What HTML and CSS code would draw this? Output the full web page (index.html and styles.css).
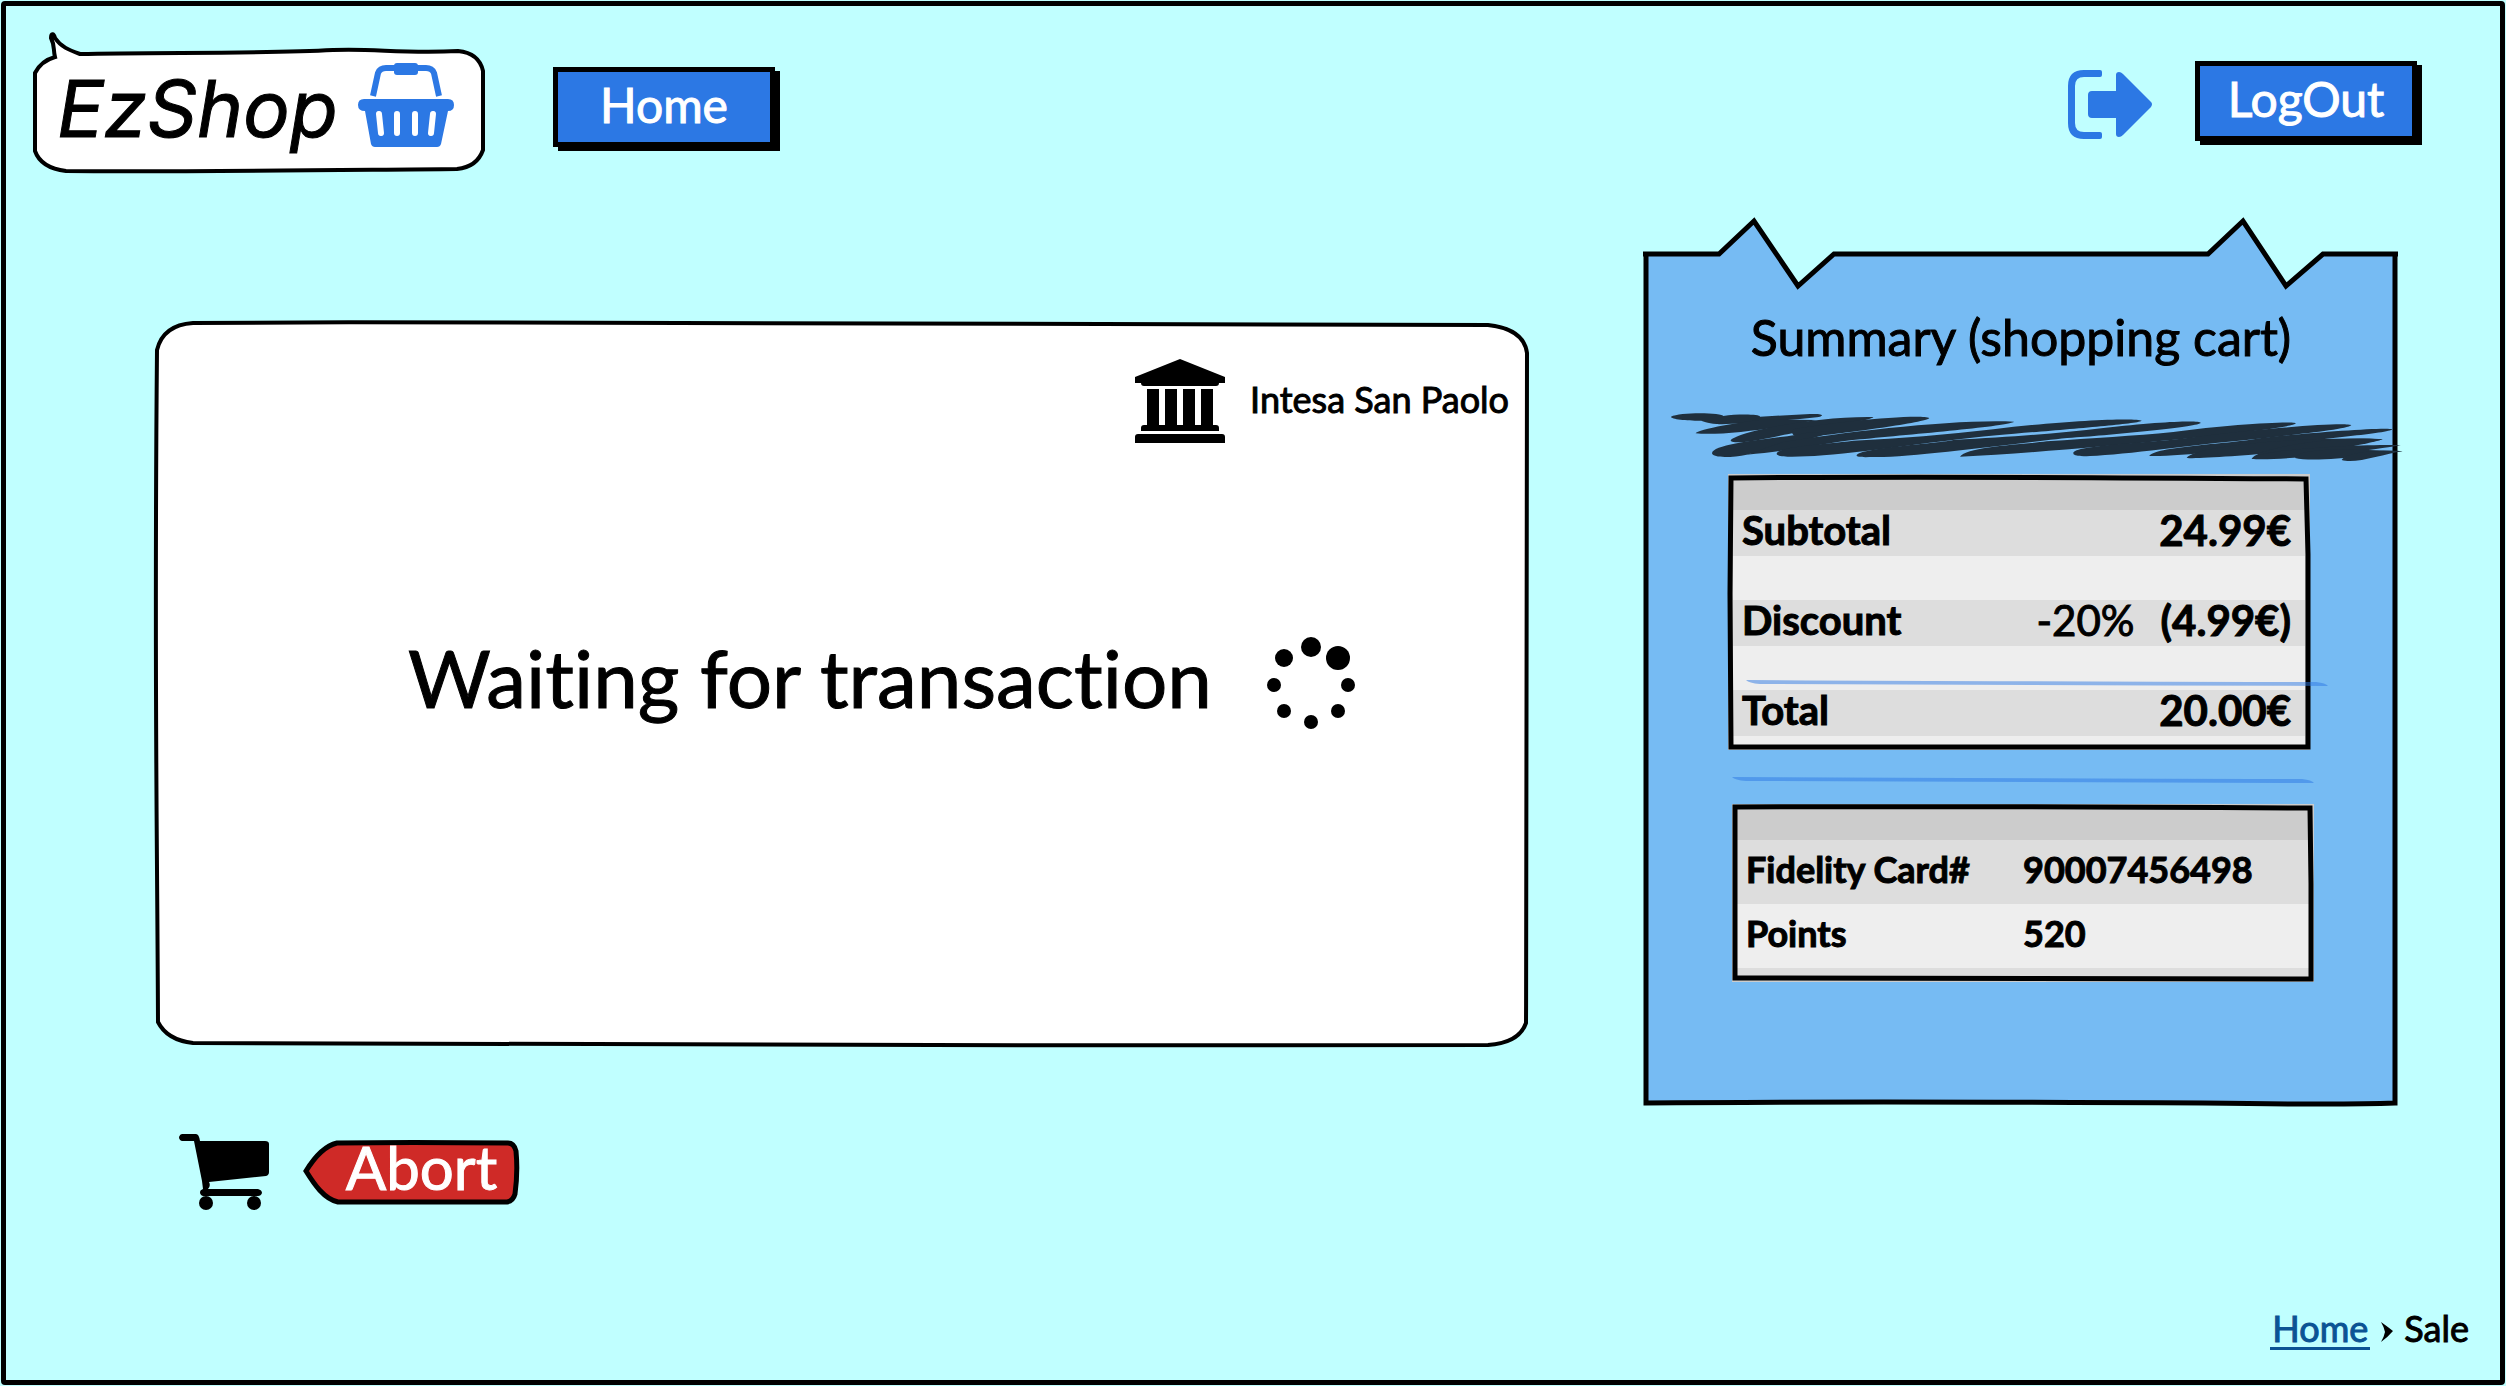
FILE: index.html
```html
<!DOCTYPE html>
<html lang="en">
<head>
<meta charset="utf-8">
<title>EzShop - Sale</title>
<link rel="stylesheet" href="styles.css">
</head>
<body>
<header class="topbar">
  <div class="logo">
    <svg class="sketch" viewBox="0 0 452 126" preserveAspectRatio="none" aria-hidden="true">
      <path class="bubble" d="M2 26Q8 14 22 10C20 2 22-1 18-9C18-15 21-13 22-9C28 0 36 3 47 7C120 5 230 7 300 3C340 1 370 7 425 4Q446 6 450 24L450 103Q444 120 424 122C300 123 150 125 33 124Q8 121 2 104Z"/>
    </svg>
    <span class="logo-text">EzShop</span>
    <svg class="basket" viewBox="0 0 96 84" aria-hidden="true">
      <path d="M15 33L20 10Q22 5 28 5L68 5Q74 5 76 10L81 33" fill="none" stroke="#2c78e4" stroke-width="6"/>
      <rect x="36" y="0" width="24" height="12" rx="3" fill="#2c78e4"/>
      <path d="M6 36H90Q96 36 96 42Q96 48 90 48L83 81Q82 84 79 84H17Q14 84 13 81L7 48Q0 48 0 42Q0 36 6 36Z" fill="#2c78e4"/>
      <path d="M21 51L23 70M39 51V70M57 51V70M75 51L73 70" stroke="#fff" stroke-width="6" stroke-linecap="round"/>
    </svg>
  </div>
  <button class="btn btn-home" type="button">Home</button>
  <div class="session">
    <svg class="exit" viewBox="0 0 84 69" aria-hidden="true">
      <path d="M32 0Q34 0 34 2V5Q34 7 32 7H16Q7 7 7 16V53Q7 62 16 62H32Q34 62 34 64V67Q34 69 32 69H16Q0 69 0 53V16Q0 0 16 0Z"/>
      <path d="M24 21H48V5Q48 2 51 2Q53 2 55 4L83 32Q85 34 83 37L55 65Q53 67 51 67Q48 67 48 64V48H24Q20 48 20 44V25Q20 21 24 21Z"/>
    </svg>
    <button class="btn" type="button">LogOut</button>
  </div>
</header>

<main class="content">
  <div class="left">
    <section class="card">
      <svg class="sketch" viewBox="0 0 1374 725" preserveAspectRatio="none" aria-hidden="true">
        <path class="outline" d="M2 29Q8 4 38 2C450-1 850 2 1333 4Q1369 8 1372 32C1373 300 1372 500 1371 702Q1364 722 1333 724C900 725 400 724 38 722Q12 719 3 701C2 480-1 350 2 29Z"/>
      </svg>
      <div class="bank">
        <svg class="bank-icon" viewBox="0 0 90 84" aria-hidden="true">
          <path d="M45 0L90 18V24H84Q84 27 81 27H9Q6 27 6 24H0V18ZM12 30H24V66H30V30H42V66H48V30H60V66H66V30H78V66H81Q84 66 84 69V72H6V69Q6 66 9 66H12ZM3 75H87Q90 75 90 78V84H0V78Q0 75 3 75Z"/>
        </svg>
        <span class="bank-name">Intesa San Paolo</span>
      </div>
      <div class="waiting">
        <h1>Waiting for transaction</h1>
        <svg class="spinner" viewBox="0 0 90 94" aria-hidden="true">
          <circle cx="45" cy="10" r="10"/><circle cx="72" cy="21" r="12"/><circle cx="82" cy="48" r="7"/><circle cx="72" cy="74" r="7"/><circle cx="45" cy="85" r="7"/><circle cx="18" cy="74" r="7"/><circle cx="8" cy="48" r="7"/><circle cx="18" cy="21" r="9"/>
        </svg>
      </div>
    </section>
    <div class="actions">
      <svg class="cart" viewBox="0 0 90 76" aria-hidden="true">
        <path d="M3 0H17Q20 0 21 7H86Q90 7 90 10V38Q90 41 87 42L30 48Q32 52 29 55H79Q83 56 83 59Q82 62 79 62H24Q21 61 21 58Q21 56 24 55L23 47L15 7H3Q0 6 0 3Q1 0 3 0Z"/>
        <circle cx="27" cy="69" r="7"/><circle cx="75" cy="69" r="7"/>
      </svg>
      <button class="abort" type="button">
        <svg class="sketch" viewBox="0 0 215 64" preserveAspectRatio="none" aria-hidden="true">
          <path d="M2 31C10 18 20 6 33 3Q100 2 204 3Q210 3 212 11Q214 32 211 54Q209 61 203 62H34C20 59 10 44 2 31Z" fill="#cf2a27" stroke="#000" stroke-width="5"/>
        </svg>
        <span class="abort-label">Abort</span>
      </button>
    </div>
  </div>

  <aside class="summary">
    <svg class="sketch" viewBox="0 0 755 855" preserveAspectRatio="none" aria-hidden="true">
      <path d="M3 3H76L111-30L155 35L191 3H565L600-30L643 35L680 3H753L752 851Q700 854 560 852H3Z" fill="#76bbf3"/>
      <path d="M0 3H76L111-30L155 35L191 3H565L600-30L643 35L680 3H755M3 3V852Q200 850 560 852Q700 854 752 852V3" fill="none" stroke="#000" stroke-width="5"/>
    </svg>
    <h2>Summary (shopping cart)</h2>
    <svg class="scribble" viewBox="33 39 2196 144" preserveAspectRatio="none" aria-hidden="true">
      <path d="M33 50C60 35 190 38 190 48C230 42 300 42 300 50L450 42C500 40 490 50 470 52C350 65 200 75 170 72C140 70 130 62 120 62C80 62 33 58 33 50Z"/>
      <path d="M107 100C110 90 250 62 330 58L470 60C350 85 180 108 107 100Z"/>
      <path d="M212 122C220 100 450 48 640 51C642 62 430 90 340 112C270 126 220 132 212 122Z"/>
      <path d="M400 88C500 68 780 40 808 54C800 68 560 98 440 112C400 116 390 100 400 88Z"/>
      <path d="M156 160C158 125 400 112 440 98L520 94C460 118 330 150 260 164C220 172 160 176 156 160Z"/>
      <path d="M365 127C560 94 900 56 1062 65C1050 78 760 102 600 118C500 128 420 150 260 164Z"/>
      <path d="M350 162C350 140 480 134 580 122C720 116 860 104 1000 88C1200 62 1430 52 1445 62C1440 72 1160 92 1010 106C800 126 560 166 440 169C400 171 352 172 350 162Z"/>
      <path d="M590 166C600 144 820 132 880 120C1060 110 1200 100 1330 84C1500 64 1620 60 1622 68C1620 80 1380 102 1250 112C1100 124 760 174 640 171C610 172 588 172 590 166Z"/>
      <path d="M900 170C920 140 1080 134 1160 124C1300 114 1420 108 1540 96C1700 74 1900 62 1908 70C1900 82 1700 102 1560 118C1300 142 1080 162 900 170Z"/>
      <path d="M1240 160C1240 134 1480 130 1600 112C1760 90 2060 64 2074 76C2060 90 1860 108 1760 120C1600 134 1400 164 1290 168C1250 170 1240 166 1240 160Z"/>
      <path d="M1468 168C1480 140 1700 132 1790 116C1900 102 2180 80 2197 88C2190 100 1960 118 1880 132C1740 148 1560 170 1468 168Z"/>
      <path d="M1580 174c20-40 412-68 588-56c-60 20-528 62-588 56z"/>
      <path d="M1775 176c20-36 275-70 393-58c-60 20-333 68-393 58z"/>
      <path d="M1775 176c20-28 313-43 447-41c-60 14-387 51-447 41z"/>
      <path d="M1905 174c20-38 226-23 323-21c-60 10-263 36-323 21z"/>
      <path d="M2045 180c20-28 128-29 183-27c-60 10-143 40-183 27z"/>
    </svg>
    <div class="sheet totals">
      <table>
        <tr><th scope="row">Subtotal</th><td>24.99€</td></tr>
        <tr><th scope="row">Discount</th><td><span class="rate">-20%</span>(4.99€)</td></tr>
        <tr><th scope="row">Total</th><td>20.00€</td></tr>
      </table>
      <svg class="sketch" viewBox="0 0 582 276" preserveAspectRatio="none" aria-hidden="true">
        <path class="frame" d="M3 4Q200 2 578 5L580 80V273Q200 273 3 273L2 120Z"/>
      </svg>
      <svg class="rule total-line" viewBox="0 0 582 6" preserveAspectRatio="none" aria-hidden="true">
        <path d="M0 0Q200 1 570 2Q580 3 582 6Q300 5 14 4Q3 3 0 0Z"/>
      </svg>
    </div>
    <svg class="rule divider" viewBox="0 0 582 6" preserveAspectRatio="none" aria-hidden="true">
      <path d="M0 0Q200 1 570 2Q580 3 582 6Q300 5 14 4Q3 3 0 0Z"/>
    </svg>
    <div class="sheet fidelity">
      <table>
        <tr><th scope="row">Fidelity Card#</th><td>90007456498</td></tr>
        <tr><th scope="row">Points</th><td>520</td></tr>
      </table>
      <svg class="sketch" viewBox="0 0 582 178" preserveAspectRatio="none" aria-hidden="true">
        <path class="frame" d="M3 3Q200 2 578 4L579 80V175Q200 175 3 174L3 90Z"/>
      </svg>
    </div>
  </aside>
</main>

<nav class="crumbs" aria-label="Breadcrumb">
  <a href="#">Home</a>
  <svg class="chevron" viewBox="0 0 12 20" aria-hidden="true"><path d="M0 0Q7 5 12 9Q6 16 0 20Q3 15 4 10Q3 5 0 0Z"/></svg>
  <span>Sale</span>
</nav>
</body>
</html>
```
FILE: styles.css
```css
* {
  box-sizing: border-box;
}

html {
  background: #c0ffff;
}

body {
  display: flex;
  flex-direction: column;
  min-height: calc(100vh - 2px);
  margin: 1px;
  border: 5px solid #000;
  border-radius: 4px;
  font-family: Lato, "Liberation Sans", sans-serif;
  font-size: 36px;
  font-variant-ligatures: none;
  -webkit-text-stroke: 1px currentColor;
  color: #000;
}

h1,
h2 {
  margin: 0;
  font-weight: 400;
}

svg {
  display: block;
  flex: none;
  overflow: visible;
}

/* Hand-drawn outlines stretch with the box they belong to */
.sketch {
  position: absolute;
  inset: 0;
  width: 100%;
  height: 100%;
  pointer-events: none;
}

.sketch path {
  vector-effect: non-scaling-stroke;
}

.bubble,
.outline {
  fill: #fff;
  stroke: #000;
  stroke-width: 4px;
}

.frame {
  fill: none;
  stroke: #000;
  stroke-width: 5px;
}

/* Top bar */
.topbar {
  display: flex;
  align-items: flex-start;
  padding: 41px 83px 0 27px;
}

.logo {
  position: relative;
  display: flex;
  align-items: center;
  justify-content: space-between;
  width: 452px;
  height: 126px;
  padding: 0 31px 10px 24px;
}

.logo-text {
  position: relative;
  padding-top: 8px;
  font: italic 400 78px/100px Inter, "Liberation Sans", sans-serif;
}

.basket {
  position: relative;
  width: 96px;
  height: 84px;
}

.btn {
  width: 222px;
  height: 80px;
  padding: 0 0 4px;
  border: 5px solid #000;
  background: #2c78e4;
  box-shadow: 5px 4px 0 #000;
  color: #fff;
  font: 400 48px/60px Lato, "Liberation Sans", sans-serif;
}

.btn-home {
  margin: 20px 0 0 68px;
}

.session {
  display: flex;
  align-items: flex-end;
  gap: 43px;
  margin: 14px 0 0 auto;
}

.exit {
  width: 84px;
  height: 69px;
  margin-bottom: 2px;
  fill: #2c78e4;
}

/* Main area */
.content {
  display: grid;
  grid-template-columns: 1374fr 755fr;
  align-items: start;
  gap: 114px;
  padding: 78px 102px 0 149px;
}

.left {
  padding-top: 70px;
}

.card {
  position: relative;
  min-height: 725px;
  padding: 38px 20px;
}

.bank {
  position: relative;
  display: flex;
  align-items: center;
  justify-content: flex-end;
  gap: 25px;
}

.bank-icon {
  width: 90px;
  height: 84px;
}

.bank-name {
  padding-bottom: 4px;
}

.waiting {
  position: relative;
  display: flex;
  align-items: center;
  justify-content: center;
  gap: 54px;
  padding: 184px 0 0 80px;
}

.waiting h1 {
  padding-bottom: 14px;
  font-size: 80px;
  line-height: 100px;
}

.spinner {
  width: 90px;
  height: 94px;
}

.actions {
  display: flex;
  align-items: center;
  gap: 35px;
  padding: 88px 0 0 24px;
}

.cart {
  width: 90px;
  height: 76px;
}

.abort {
  position: relative;
  width: 215px;
  height: 64px;
  padding: 0 0 10px 20px;
  border: 0;
  background: none;
  color: #fff;
  font: 400 60px/54px Lato, "Liberation Sans", sans-serif;
}

.abort-label {
  position: relative;
}

/* Summary note */
.summary {
  position: relative;
  min-height: 855px;
  padding: 56px 84px 0 85px;
}

.summary h2 {
  position: relative;
  font-size: 50px;
  line-height: 60px;
  text-align: center;
}

.scribble {
  position: relative;
  width: calc(100% + 146px);
  height: 48px;
  margin: 46px -89px 13px -57px;
  fill: #1f2f3d;
}

.sheet {
  position: relative;
  padding: 36px 5px 5px;
  background: #ccc;
}

.sheet table {
  width: 100%;
  border-collapse: collapse;
}

.sheet th,
.sheet td {
  padding: 0;
  background: #ddd;
  font-weight: 700;
  text-align: left;
  vertical-align: top;
}

.sheet th {
  padding-left: 9px;
}

.totals {
  margin-right: 4px;
  font-size: 40px;
  line-height: 40px;
}

.totals tr {
  border-bottom: 44px solid #eee;
}

.totals tr:last-child {
  border-bottom-width: 9px;
}

.totals th,
.totals td {
  padding-bottom: 6px;
}

.totals td {
  padding-right: 14px;
  font-size: 42px;
  text-align: right;
}

.rate {
  margin-right: 26px;
  font-weight: 400;
}

.rule {
  width: calc(100% - 4px);
  height: 6px;
  fill: #2c78e4;
  fill-opacity: 0.5;
}

.total-line {
  position: absolute;
  top: 206px;
  left: 18px;
  width: 100%;
}

.divider {
  position: relative;
  margin: 27px 0 21px 4px;
}

.fidelity {
  margin-left: 4px;
  font-size: 36px;
  line-height: 58px;
}

.fidelity th,
.fidelity td {
  width: 50%;
  padding-bottom: 6px;
}

.fidelity tr:last-child th,
.fidelity tr:last-child td {
  background: #eee;
}

.fidelity tr:last-child {
  border-bottom: 9px solid #ddd;
}

/* Breadcrumb */
.crumbs {
  display: flex;
  align-items: baseline;
  justify-content: flex-end;
  gap: 11px;
  margin-top: auto;
  padding: 0 31px 30px;
  line-height: 38px;
}

.crumbs a {
  padding: 0 2px;
  border-bottom: 3px solid #0b5394;
  color: #0b5394;
  text-decoration: none;
}

.chevron {
  width: 12px;
  height: 20px;
}
```
